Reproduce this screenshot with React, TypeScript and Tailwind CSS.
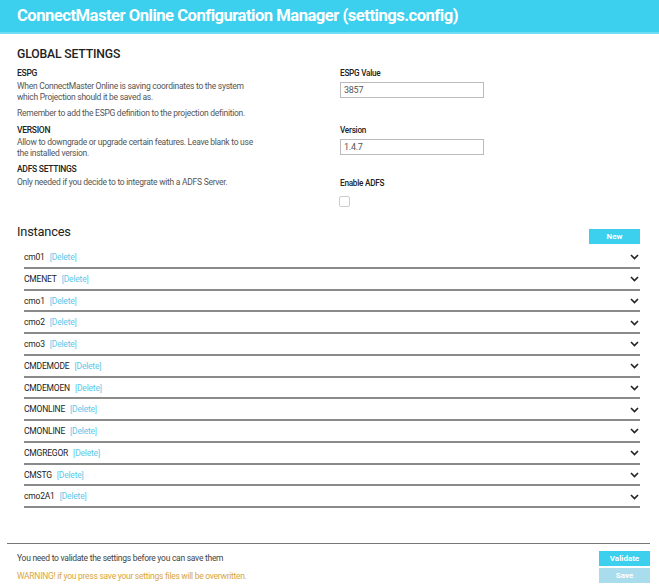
import React from "react";

const instances = [
  "cm01",
  "CMENET",
  "cmo1",
  "cmo2",
  "cmo3",
  "CMDEMODE",
  "CMDEMOEN",
  "CMONLINE",
  "CMONLINE",
  "CMGREGOR",
  "CMSTG",
  "cmo2A1",
];

function Chevron() {
  return (
    <svg width="9" height="6" viewBox="0 0 9 6" className="block">
      <path d="M1 1 L4.5 4.5 L8 1" fill="none" stroke="#222" strokeWidth="1.6" />
    </svg>
  );
}

export default function App() {
  return (
    <div
      className="w-[659px] h-[588px] bg-white overflow-hidden text-[#333]"
      style={{ fontFamily: "Roboto, 'Liberation Sans', sans-serif" }}
    >
      <header className="h-[34px] bg-[#3ccfee] border-b-2 border-[#6fdcf3] flex items-center px-[17px]">
        <h1 className="text-[16.6px] font-bold text-white tracking-[-0.5px] leading-none">
          ConnectMaster Online Configuration Manager (settings.config)
        </h1>
      </header>

      <div className="px-[17px]">
        <h2 className="mt-[12px] text-[12.2px] font-medium text-[#222] leading-[16px] tracking-[-0.15px]">
          GLOBAL SETTINGS
        </h2>

        <div className="flex mt-[6px]">
          <div className="w-[323px] text-[8.5px] leading-[11px] tracking-[-0.27px]">
            <div className="font-medium text-[#222]">ESPG</div>
            <p className="mt-[2px] text-[#555]">
              When ConnectMaster Online is saving coordinates to the system
              <br />
              which Projection should it be saved as.
            </p>
            <p className="mt-[5px] text-[#555]">
              Remember to add the ESPG definition to the projection definition.
            </p>
            <div className="mt-[6px] font-medium text-[#222]">VERSION</div>
            <p className="mt-[1px] text-[#555]">
              Allow to downgrade or upgrade certain features. Leave blank to use
              <br />
              the installed version.
            </p>
            <div className="mt-[5px] font-medium text-[#222]">ADFS SETTINGS</div>
            <p className="mt-[2px] text-[#555]">
              Only needed if you decide to to integrate with a ADFS Server.
            </p>
          </div>

          <div className="flex flex-col text-[8.2px] leading-[11px] tracking-[-0.25px]">
            <div className="font-medium text-[#222]">ESPG Value</div>
            <div className="mt-[3px] w-[144px] h-[16px] border border-[#bbb] px-[3px] flex items-center text-[9px] text-[#555]">
              3857
            </div>
            <div className="mt-[27px] font-medium text-[#222]">Version</div>
            <div className="mt-[3px] w-[144px] h-[16px] border border-[#bbb] px-[3px] flex items-center text-[9px] text-[#555]">
              1.4.7
            </div>
            <div className="mt-[23px] font-medium text-[#222]">Enable ADFS</div>
            <div className="mt-[7px] -ml-[1px] w-[11px] h-[11px] border border-[#ccc] rounded-[2px]" />
          </div>
        </div>

        <div className="mt-[15px] flex items-start justify-between pr-[2px]">
          <h2 className="text-[12.8px] text-[#222] leading-[16px] mt-[2px] tracking-[-0.2px]">Instances</h2>
          <button className="mt-[7px] w-[51px] h-[15px] bg-[#3ccfee] text-white text-[8px] font-bold flex items-center justify-center">
            New
          </button>
        </div>

        <div className="mt-[3px] ml-[7px] mr-[2px]">
          {instances.map((name, i) => (
            <div
              key={i}
              className="h-[21.75px] border-b-2 border-[#8a8a8a] flex items-center justify-between pt-[1px]"
            >
              <div className="flex items-center text-[8.5px] tracking-[-0.2px]">
                <span className="text-[#222]">{name}</span>
                <span className="ml-[5px] text-[#5cc8ea]">[Delete]</span>
              </div>
              <div className="mr-[1px]">
                <Chevron />
              </div>
            </div>
          ))}
        </div>
      </div>

      <div className="mt-[35px] mx-[7px] border-t border-[#777] w-[643px]">
        <div className="flex justify-between pl-[10px]">
          <div className="text-[8.5px] leading-[11px] tracking-[-0.27px]">
            <div className="mt-[9px] text-[#444]">You need to validate the settings before you can save them</div>
            <div className="mt-[7px] text-[#d9a63c]">
              WARNING! if you press save your settings files will be overwritten.
            </div>
          </div>
          <div className="flex flex-col gap-[2px] mt-[7px]">
            <button className="w-[51px] h-[15px] bg-[#3ccfee] text-white text-[8px] font-bold flex items-center justify-center">
              Validate
            </button>
            <button className="w-[51px] h-[15px] bg-[#a9dced] text-white text-[8px] font-bold flex items-center justify-center">
              Save
            </button>
          </div>
        </div>
      </div>
    </div>
  );
}
